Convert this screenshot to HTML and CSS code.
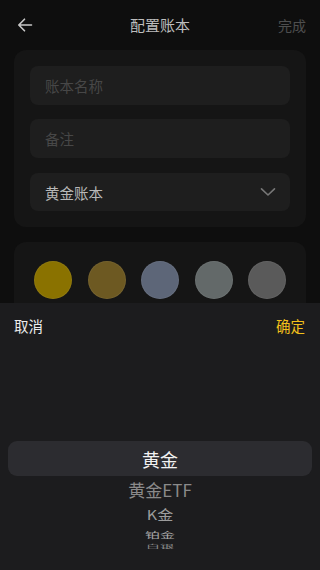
FILE: index.html
```html
<!DOCTYPE html>
<html lang="zh">
<head>
<meta charset="utf-8">
<link rel="stylesheet" href="styles.css">
</head>
<body>
<div class="page">
  <header class="topbar">
    <svg class="back" width="16" height="16" viewBox="0 0 16 16"><path d="M14.5 8H2M7.5 2.2L1.8 8l5.7 5.8" fill="none" stroke="#c8c8c8" stroke-width="1.6" stroke-linecap="round" stroke-linejoin="round"/></svg>
    <div class="title">配置账本</div>
    <div class="done">完成</div>
  </header>

  <section class="card form">
    <div class="field placeholder">账本名称</div>
    <div class="field placeholder">备注</div>
    <div class="field select">
      <span>黄金账本</span>
      <svg width="16" height="10" viewBox="0 0 16 10"><path d="M1.5 1.8L8 8l6.5-6.2" fill="none" stroke="#777" stroke-width="1.6" stroke-linecap="round" stroke-linejoin="round"/></svg>
    </div>
  </section>

  <section class="card colors">
    <span class="dot c1"></span>
    <span class="dot c2"></span>
    <span class="dot c3"></span>
    <span class="dot c4"></span>
    <span class="dot c5"></span>
  </section>

  <div class="sheet">
    <div class="sheet-head">
      <span class="cancel">取消</span>
      <span class="ok">确定</span>
    </div>
    <div class="picker">
      <div class="item selected">黄金</div>
      <div class="item i1">黄金ETF</div>
      <div class="item i2"><span>K金</span></div>
      <div class="item i3"><span>铂金</span></div>
      <div class="item i4"><span>白银</span></div>
    </div>
  </div>
</div>
</body>
</html>
```

FILE: styles.css
```css
* { box-sizing: border-box; }
html, body { margin: 0; padding: 0; }
body {
  background: #0e0e0e;
  font-family: "Noto Sans CJK SC", "Noto Sans", sans-serif;
  width: 320px;
  height: 570px;
  overflow: hidden;
}
.page {
  position: relative;
  width: 320px;
  height: 570px;
}
.topbar {
  height: 50px;
  display: flex;
  align-items: center;
  padding: 0 14px 0 17px;
  position: relative;
}
.back { display: block; }
.title {
  position: absolute;
  left: 0;
  right: 0;
  text-align: center;
  font-size: 15px;
  color: #bdbdbd;
  line-height: 50px;
  pointer-events: none;
}
.done {
  margin-left: auto;
  font-size: 14px;
  color: #4e4e4e;
}
.card {
  margin: 0 14px;
  background: #151515;
  border-radius: 12px;
}
.form {
  padding: 16px 16px 16px;
  display: flex;
  flex-direction: column;
  gap: 14px;
}
.field {
  height: 39px;
  border-radius: 8px;
  background: #1e1e1e;
  display: flex;
  align-items: center;
  padding: 0 14px 0 15px;
  font-size: 14.5px;
}
.placeholder { color: #474747; }
.select {
  color: #b8b8b8;
  justify-content: space-between;
  height: 38px;
  margin-top: 1px;
}
.colors {
  margin-top: 15px;
  padding: 19px 20px 30px;
  display: flex;
  justify-content: space-between;
}
.dot {
  width: 38px;
  height: 38px;
  border-radius: 50%;
  display: block;
  box-shadow: inset 0 0 0 1px rgba(255,255,255,0.06);
}
.c1 { background: #8a7200; }
.c2 { background: #6d5922; }
.c3 { background: #5d6678; }
.c4 { background: #636969; }
.c5 { background: #5a5a5a; }

.sheet {
  position: absolute;
  left: 0;
  right: 0;
  top: 303px;
  bottom: 0;
  background: #1c1c1e;
}
.sheet-head {
  height: 44px;
  display: flex;
  align-items: center;
  justify-content: space-between;
  padding: 0 15px 0 14px;
  font-size: 14.5px;
}
.cancel { color: #ececec; }
.ok { color: #f3c01b; }
.picker {
  padding-top: 94px;
  height: 202px;
  overflow: hidden;
  display: flex;
  flex-direction: column;
  align-items: stretch;
}
.item {
  text-align: center;
  display: flex;
  justify-content: center;
  align-items: center;
  flex: none;
  overflow: hidden;
}
.selected {
  margin: 0 8px;
  height: 35px;
  border-radius: 9px;
  background: #2c2c30;
  color: #f2f2f2;
  font-size: 18px;
}
.i1 {
  height: 26px;
  color: #8a8a8a;
  font-size: 17px;
}
.i2 {
  height: 24px;
  color: #9c9c9c;
  font-size: 16px;
}
.i2 span { display: inline-block; transform: scaleY(0.82); }
.i3 {
  height: 16px;
  color: #a8a8a8;
  font-size: 15px;
}
.i3 span { display: inline-block; transform: scaleY(0.55); line-height: 1; }
.i4 {
  height: 8px;
  color: #8a8a8a;
  font-size: 14px;
}
.i4 span { display: inline-block; transform: scaleY(0.3); line-height: 1; }
```
